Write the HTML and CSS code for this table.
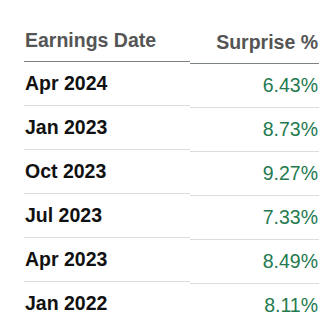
FILE: index.html
```html
<!DOCTYPE html>
<html lang="en">
<head>
<meta charset="utf-8">
<title>Earnings Surprise</title>
<link rel="stylesheet" href="styles.css">
</head>
<body>
<div class="board">
  <div class="col col-date">
    <div class="head">Earnings Date</div>
    <div class="cell date">Apr 2024</div>
    <div class="cell date">Jan 2023</div>
    <div class="cell date">Oct 2023</div>
    <div class="cell date">Jul 2023</div>
    <div class="cell date">Apr 2023</div>
    <div class="cell date">Jan 2022</div>
  </div>
  <div class="col col-surprise">
    <div class="head">Surprise %</div>
    <div class="cell pct">6.43%</div>
    <div class="cell pct">8.73%</div>
    <div class="cell pct">9.27%</div>
    <div class="cell pct">7.33%</div>
    <div class="cell pct">8.49%</div>
    <div class="cell pct">8.11%</div>
  </div>
</div>
</body>
</html>
```
FILE: styles.css
```css
html, body {
  margin: 0;
  padding: 0;
  background: #ffffff;
}

body {
  font-family: "Liberation Sans", Arial, sans-serif;
}

.board {
  display: flex;
  padding: 19px 0 0 24px;
  width: 295px;
}

.col-date {
  width: 166px;
}

.col-surprise {
  width: 129px;
  margin-top: 2px;
  text-align: right;
}

.head {
  font-size: 19.5px;
  line-height: 22px;
  font-weight: bold;
  color: #555555;
  padding: 10px 1px 10px 1px;
  border-bottom: 1px solid #7d8583;
}

.cell {
  font-size: 19.5px;
  line-height: 22px;
  padding: 10px 1px 11px 1px;
  border-bottom: 1px solid #dddddd;
}

.cell:last-child {
  border-bottom: none;
}

.date {
  font-weight: bold;
  color: #111111;
}

.pct {
  color: #247a4f;
}
```
